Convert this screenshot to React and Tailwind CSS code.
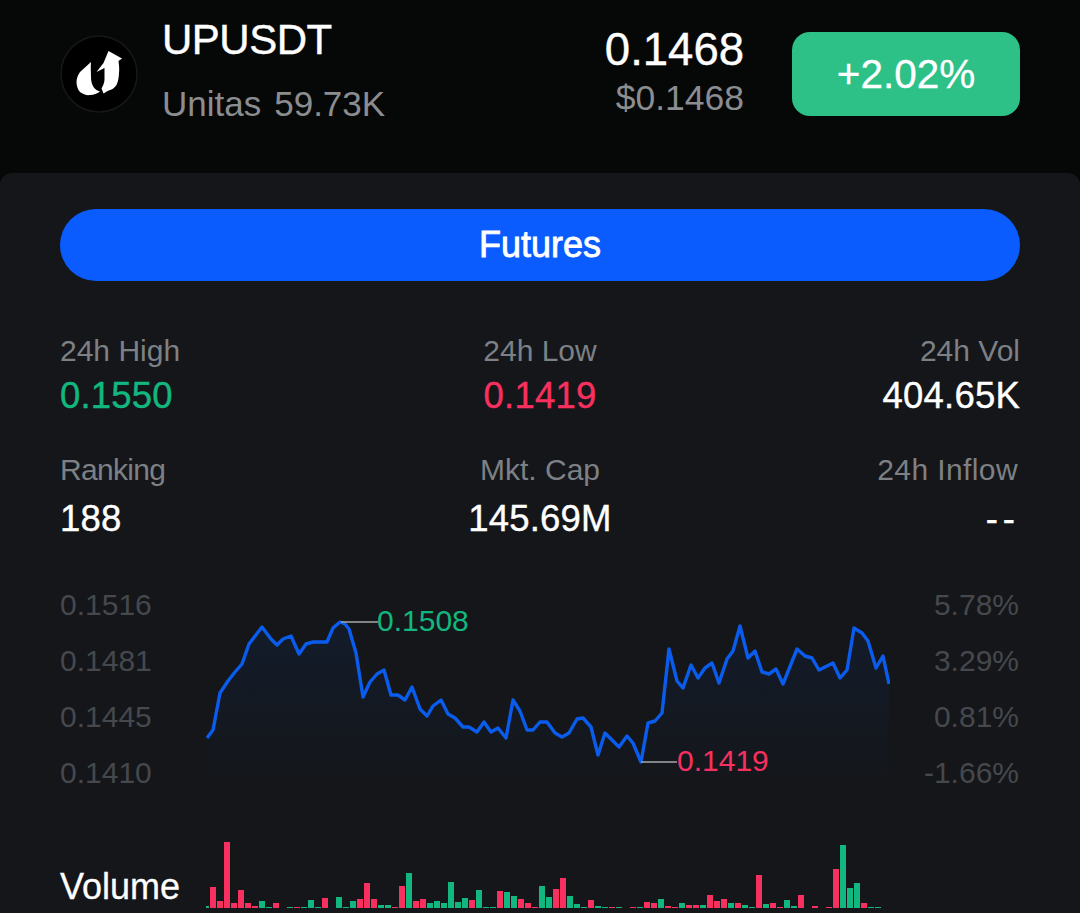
import React from 'react';

const linePts = [
  [207, 737], [213, 729], [220, 692], [228, 680], [235, 671], [242, 663], [249, 643], [262, 626], [271, 638], [277, 644],
  [283, 638], [291, 635], [299, 653], [306, 643], [313, 641], [327, 641], [333, 627], [340, 621], [345, 623], [349, 628],
  [356, 652], [363, 696], [370, 681], [377, 673], [384, 669], [391, 694], [398, 694], [405, 699], [412, 686], [420, 708],
  [427, 715], [433, 705], [441, 699], [448, 713], [455, 717], [463, 726], [469, 726], [477, 731], [484, 721], [491, 731],
  [498, 727], [506, 737], [513, 699], [520, 710], [527, 729], [533, 729], [540, 721], [547, 721], [555, 732], [562, 736],
  [569, 732], [577, 718], [583, 717], [591, 726], [598, 754], [605, 732], [619, 746], [627, 735], [633, 742], [641, 761],
  [648, 722], [655, 720], [662, 712], [669, 648], [677, 680], [683, 687], [691, 664], [698, 677], [705, 667], [712, 662],
  [719, 682], [727, 658], [733, 650], [740, 625], [748, 657], [755, 650], [762, 671], [769, 673], [776, 668], [783, 683],
  [797, 648], [805, 655], [812, 657], [819, 669], [833, 662], [840, 677], [847, 669], [854, 627], [862, 632], [868, 640],
  [876, 667], [883, 655], [889, 683],
];

// [height, g/r], one per 7px slot, 0 means no bar
const bars = [
  [2, 'g'], [21, 'r'], [7, 'r'], [66, 'r'], [5, 'r'], [18, 'r'], [5, 'r'], [2, 'r'], [7, 'g'], [1, 'g'],
  [5, 'r'], [0, 'g'], [1, 'g'], [1, 'r'], [1, 'g'], [8, 'g'], [1, 'g'], [10, 'r'], [0, 'g'], [11, 'g'],
  [1, 'g'], [7, 'g'], [9, 'r'], [25, 'r'], [9, 'r'], [3, 'g'], [3, 'g'], [1, 'r'], [22, 'r'], [35, 'g'],
  [7, 'r'], [9, 'r'], [5, 'g'], [7, 'g'], [5, 'g'], [26, 'g'], [6, 'g'], [10, 'g'], [8, 'r'], [18, 'g'],
  [1, 'g'], [1, 'g'], [17, 'r'], [16, 'g'], [12, 'g'], [9, 'r'], [5, 'r'], [1, 'r'], [22, 'g'], [11, 'g'],
  [19, 'r'], [30, 'r'], [12, 'g'], [4, 'g'], [1, 'g'], [8, 'r'], [2, 'g'], [1, 'g'], [1, 'r'], [1, 'g'],
  [0, 'g'], [1, 'r'], [1, 'g'], [6, 'r'], [5, 'r'], [9, 'g'], [2, 'r'], [1, 'r'], [5, 'g'], [3, 'r'],
  [3, 'r'], [3, 'g'], [13, 'r'], [7, 'r'], [9, 'r'], [5, 'g'], [5, 'r'], [3, 'g'], [1, 'g'], [33, 'r'],
  [4, 'g'], [5, 'r'], [1, 'r'], [8, 'g'], [2, 'g'], [13, 'r'], [0, 'g'], [2, 'r'], [0, 'g'], [1, 'r'],
  [39, 'r'], [63, 'g'], [20, 'g'], [25, 'g'], [5, 'r'], [1, 'g'], [1, 'g'],
];

const UpLogo = () => (
  <svg width="80" height="80" viewBox="59 34 80 80" className="shrink-0">
    <circle cx="99" cy="74" r="38" fill="#000" stroke="#15171a" strokeWidth="1.5" />
    <path d="M91 62 L80 72 C78 75 76.500 78 76.500 82 C76.500 86 78 90 80 92 C83 94.500 87 95.500 90 95 C94 95 97 93.500 100 91.500 C97 90.500 95 89 93.500 87 C91.500 84 91 80 91 77 C91 72 90.500 67 91 62 Z" fill="#fff" />
    <path d="M108.500 51 L122 58.500 L118.500 61 C119 65 119.500 69 119 73 C118.800 78 118 82 116.500 85 C114.500 88 112 89.500 110 90 C107.500 91 105 92.500 103.500 93.500 L101.500 88.500 C103 86 104.200 83 104.500 80 L104.500 68 L96.500 72 L103.500 63 Z" fill="#fff" />
  </svg>
);

const Stat = ({ label, value, color = 'text-white', align = 'text-left', valueGap = 'mt-[9px]', labelClass = '' }) => (
  <div className={align}>
    <div className={`text-[30px] leading-[36px] text-[#7d8085] ${labelClass}`}>{label}</div>
    <div className={`${valueGap} text-[36.500px] leading-[36px] tracking-[0.2px] [-webkit-text-stroke:0.4px] ${color}`}>{value}</div>
  </div>
);

const AxisCol = ({ items, className }) => (
  <div className={`flex flex-col gap-[20px] text-[30px] leading-[36px] text-[#45484d] ${className}`}>
    {items.map((t) => (
      <span key={t}>{t}</span>
    ))}
  </div>
);

const PriceChart = () => {
  const pts = linePts.map((p) => `${p[0]},${p[1]}`).join(' ');
  return (
    <svg width="684" height="220" viewBox="206 590 684 220" className="shrink-0">
      <defs>
        <linearGradient id="area" x1="0" y1="0" x2="0" y2="1">
          <stop offset="0" stopColor="#0a5cff" stopOpacity="0.08" />
          <stop offset="1" stopColor="#0a5cff" stopOpacity="0" />
        </linearGradient>
      </defs>
      <polygon points={`207,790 ${pts} 889,790`} fill="url(#area)" />
      <polyline points={pts} fill="none" stroke="#0a5ced" strokeWidth="3.4" strokeLinejoin="round" />
      <line x1="341" y1="621" x2="378" y2="621" stroke="#a6a8aa" strokeWidth="1.500" />
      <line x1="641" y1="761" x2="677" y2="761" stroke="#a6a8aa" strokeWidth="1.500" />
    </svg>
  );
};

export default function App() {
  return (
    <div className="w-[1080px] h-[913px] overflow-hidden bg-[#060707] font-['Liberation_Sans',sans-serif]">
      <header className="h-[173px] flex items-start pl-[59px] pr-[60px]">
        <div className="mt-[34px]">
          <UpLogo />
        </div>
        <div className="ml-[23px] mt-[16px]">
          <div className="text-[42px] leading-[48px] tracking-[-0.5px] text-white [-webkit-text-stroke:0.4px]">UPUSDT</div>
          <div className="mt-[20px] text-[35px] leading-[40px] text-[#8b8d90]">
            Unitas<span className="ml-[13px]">59.73K</span>
          </div>
        </div>
        <div className="ml-auto mt-[28px] text-right">
          <div className="text-[45.500px] leading-[44px] text-white [-webkit-text-stroke:0.4px]">0.1468</div>
          <div className="mt-[6px] text-[35.500px] leading-[40px] text-[#8b8d90]">$0.1468</div>
        </div>
        <div className="ml-[48px] mt-[32px] w-[228px] h-[84px] rounded-[18px] bg-[#2dc187] flex items-center justify-center text-[40.500px] text-white [-webkit-text-stroke:0.3px]">
          +2.02%
        </div>
      </header>

      <main className="h-[740px] rounded-t-[12px] bg-[#141619] px-[60px] pt-[36px]">
        <button className="block w-full h-[72px] rounded-full bg-[#0a5cff] text-[36px] text-white [-webkit-text-stroke:0.8px]">
          Futures
        </button>

        <div className="mt-[52px] grid grid-cols-3 gap-y-[38px]">
          <Stat label="24h High" value="0.1550" color="text-[#12b77f]" />
          <Stat label="24h Low" value="0.1419" color="text-[#f7305f]" align="text-center" />
          <Stat label="24h Vol" value="404.65K" align="text-right" />
          <Stat label="Ranking" value="188" valueGap="mt-[13px]" labelClass="tracking-[-0.7px]" />
          <Stat label="Mkt. Cap" value="145.69M" align="text-center" valueGap="mt-[13px]" />
          <Stat label="24h Inflow" value="--" align="text-right" valueGap="mt-[13px] tracking-[5px]" labelClass="tracking-[0.4px] pr-[2px]" />
        </div>

        <div className="relative mt-[54px] -mx-[60px] pl-[60px] flex items-start">
          <AxisCol items={['0.1516', '0.1481', '0.1445', '0.1410']} className="w-[146px] mt-[-4px]" />
          <PriceChart />
          <AxisCol items={['5.78%', '3.29%', '0.81%', '-1.66%']} className="w-[129px] mt-[-4px] text-right" />
          <span className="absolute left-[377px] top-[12px] text-[30px] leading-[36px] text-[#12b77f]">0.1508</span>
          <span className="absolute left-[677px] top-[152px] text-[30px] leading-[36px] text-[#f7305f]">0.1419</span>
        </div>

        <div className="mt-[23px] -mx-[60px] pl-[60px] flex items-end h-[80px]">
          <div className="w-[146px] text-[36px] leading-[40px] text-white pb-[7px] [-webkit-text-stroke:0.3px]">Volume</div>
          <svg width="684" height="80" viewBox="206 833 684 80" className="shrink-0">
            {bars.map((b, i) =>
              b[0] > 0 ? (
                <rect
                  key={i}
                  x={i === 0 ? 206 : 203 + 7 * i}
                  y={907 - b[0]}
                  width={i === 0 ? 3 : 6}
                  height={b[0]}
                  fill={b[1] === 'g' ? '#12b77f' : '#f7305f'}
                />
              ) : null
            )}
          </svg>
        </div>
      </main>
    </div>
  );
}
